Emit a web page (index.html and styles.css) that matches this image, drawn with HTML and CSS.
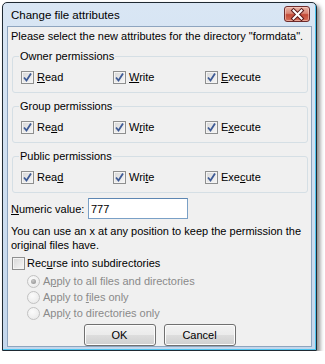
FILE: index.html
```html
<!DOCTYPE html>
<html>
<head>
<meta charset="utf-8">
<link rel="stylesheet" href="styles.css">
</head>
<body>
<div class="window">
  <div class="titlebar">
    <span class="title">Change file attributes</span>
    <span class="close">
      <svg width="25" height="15" viewBox="0 0 25 15">
        <path d="M8.5 3.5 L16.5 11.5 M16.5 3.5 L8.5 11.5" stroke="#5a1a1a" stroke-width="4" stroke-linecap="square"/>
        <path d="M8.5 3.5 L16.5 11.5 M16.5 3.5 L8.5 11.5" stroke="#ffffff" stroke-width="2" stroke-linecap="square"/>
      </svg>
    </span>
  </div>
  <div class="client">
    <p class="intro">Please select the new attributes for the directory "formdata".</p>

    <fieldset class="group">
      <legend>Owner permissions</legend>
      <div class="checks">
        <label class="chk"><span class="box on"><svg width="11" height="11" viewBox="0 0 11 11"><path d="M2 5.5 L4.5 8.5 L9 1.5" class="tick"/></svg></span><span><u>R</u>ead</span></label>
        <label class="chk"><span class="box on"><svg width="11" height="11" viewBox="0 0 11 11"><path d="M2 5.5 L4.5 8.5 L9 1.5" class="tick"/></svg></span><span><u>W</u>rite</span></label>
        <label class="chk"><span class="box on"><svg width="11" height="11" viewBox="0 0 11 11"><path d="M2 5.5 L4.5 8.5 L9 1.5" class="tick"/></svg></span><span><u>E</u>xecute</span></label>
      </div>
    </fieldset>

    <fieldset class="group">
      <legend>Group permissions</legend>
      <div class="checks">
        <label class="chk"><span class="box on"><svg width="11" height="11" viewBox="0 0 11 11"><path d="M2 5.5 L4.5 8.5 L9 1.5" class="tick"/></svg></span><span>Re<u>a</u>d</span></label>
        <label class="chk"><span class="box on"><svg width="11" height="11" viewBox="0 0 11 11"><path d="M2 5.5 L4.5 8.5 L9 1.5" class="tick"/></svg></span><span>W<u>r</u>ite</span></label>
        <label class="chk"><span class="box on"><svg width="11" height="11" viewBox="0 0 11 11"><path d="M2 5.5 L4.5 8.5 L9 1.5" class="tick"/></svg></span><span>E<u>x</u>ecute</span></label>
      </div>
    </fieldset>

    <fieldset class="group">
      <legend>Public permissions</legend>
      <div class="checks">
        <label class="chk"><span class="box on"><svg width="11" height="11" viewBox="0 0 11 11"><path d="M2 5.5 L4.5 8.5 L9 1.5" class="tick"/></svg></span><span>Rea<u>d</u></span></label>
        <label class="chk"><span class="box on"><svg width="11" height="11" viewBox="0 0 11 11"><path d="M2 5.5 L4.5 8.5 L9 1.5" class="tick"/></svg></span><span>Wri<u>t</u>e</span></label>
        <label class="chk"><span class="box on"><svg width="11" height="11" viewBox="0 0 11 11"><path d="M2 5.5 L4.5 8.5 L9 1.5" class="tick"/></svg></span><span>Exe<u>c</u>ute</span></label>
      </div>
    </fieldset>

    <div class="numeric">
      <span class="num-label"><u>N</u>umeric value:</span>
      <span class="textbox">777</span>
    </div>

    <p class="help">You can use an x at any position to keep the permission the<br>original files have.</p>

    <label class="chk recurse"><span class="box"></span><span>Rec<u>u</u>rse into subdirectories</span></label>

    <div class="radios">
      <label class="radio"><span class="dot sel"></span><span>A<u>p</u>ply to all files and directories</span></label>
      <label class="radio"><span class="dot"></span><span>Apply to <u>f</u>iles only</span></label>
      <label class="radio"><span class="dot"></span><span>Appl<u>y</u> to directories only</span></label>
    </div>

    <div class="buttons">
      <span class="btn">OK</span>
      <span class="btn">Cancel</span>
    </div>
  </div>
</div>
</body>
</html>
```

FILE: styles.css
```css
* { box-sizing: border-box; }

body {
  margin: 0;
  background: #ffffff;
  font-family: "Liberation Sans", Arial, sans-serif;
  font-size: 11px;
  line-height: 14px;
  color: #000;
}

.window {
  margin: 2px 0 0 2px;
  width: 315px;
  height: 349px;
  border: 1px solid #1f2a33;
  border-radius: 5px 5px 0 0;
  background: linear-gradient(#d9e6f4, #c4d7ec);
  padding: 0 4px 3px;
  box-shadow: inset -1px -1px 0 #4cc4ef, 3px 3px 4px rgba(0, 0, 0, 0.45);
  display: flex;
  flex-direction: column;
}

.titlebar {
  height: 23px;
  display: flex;
  justify-content: space-between;
  align-items: center;
  padding-left: 4px;
}

.title {
  font-size: 11.5px;
}

.close {
  align-self: flex-start;
  margin-top: 3px;
  margin-right: 2px;
  width: 26px;
  height: 16px;
  border: 1px solid #6d2b2b;
  border-radius: 3px;
  background: linear-gradient(#e9b3a6 0%, #d98776 45%, #c34a37 55%, #d6705a 100%);
  box-shadow: inset 0 0 0 1px rgba(255, 220, 210, 0.5);
  display: flex;
  align-items: center;
  justify-content: center;
  overflow: hidden;
}

.close svg { display: block; margin: -1px; }

.client {
  flex: 1;
  border: 1px solid #8ea5bf;
  background: #f0f0f0;
  padding: 2px 3px 0;
  display: flex;
  flex-direction: column;
}

.intro { margin: 0; }

.group {
  margin: 6px 0 0 1px;
  border: 1px solid #d5dfe5;
  border-radius: 3px;
  padding: 0 0 8px 8px;
}

.group + .group { margin-top: 6px; }

.group legend {
  padding: 0 1px;
  margin-left: -2px;
  line-height: 14px;
}

.checks {
  margin-top: 7px;
  display: grid;
  grid-template-columns: 92px 92px auto;
}

.chk {
  display: flex;
  align-items: center;
  gap: 3px;
  height: 14px;
}

.box {
  width: 13px;
  height: 13px;
  border: 1px solid #8e8f8f;
  background: linear-gradient(135deg, #d7d7d7, #f7f7f7);
  box-shadow: inset 0 0 0 1px #f4f4f4;
  display: flex;
  align-items: center;
  justify-content: center;
  flex: none;
}

.box svg { display: block; }

.tick {
  fill: none;
  stroke: #3d5a96;
  stroke-width: 1.8;
}

.numeric {
  margin-top: 5px;
  display: flex;
  align-items: center;
  height: 21px;
}

.num-label { width: 77px; }

.textbox {
  width: 100px;
  height: 21px;
  border: 1px solid #7aa0c6;
  border-top-color: #5d86b2;
  background: #fff;
  padding: 0 2px;
  display: flex;
  align-items: center;
}

.help {
  margin: 5px 0 0;
}

.recurse {
  margin-top: 4px;
  margin-left: 1px;
  gap: 2px;
}

.radios {
  margin-top: 3px;
  padding-left: 16px;
  display: flex;
  flex-direction: column;
  color: #8a8a8a;
}

.radio {
  display: flex;
  align-items: center;
  gap: 3px;
  height: 16px;
}

.dot {
  width: 13px;
  height: 13px;
  border-radius: 50%;
  border: 1px solid #c2c2c2;
  background: radial-gradient(circle at 40% 35%, #fbfbfb, #e6e6e6);
  flex: none;
  display: flex;
  align-items: center;
  justify-content: center;
}

.dot.sel::after {
  content: "";
  width: 5px;
  height: 5px;
  border-radius: 50%;
  background: radial-gradient(circle at 40% 35%, #c8c8c8, #8a8a8a);
}

.buttons {
  margin-top: 3px;
  display: flex;
  justify-content: center;
  gap: 8px;
}

.btn {
  width: 72px;
  height: 22px;
  border: 1px solid #707070;
  border-radius: 3px;
  background: linear-gradient(#f2f2f2 0%, #ebebeb 50%, #dddddd 51%, #cfcfcf 100%);
  box-shadow: inset 0 0 0 1px #fcfcfc;
  display: flex;
  align-items: center;
  justify-content: center;
}
```
